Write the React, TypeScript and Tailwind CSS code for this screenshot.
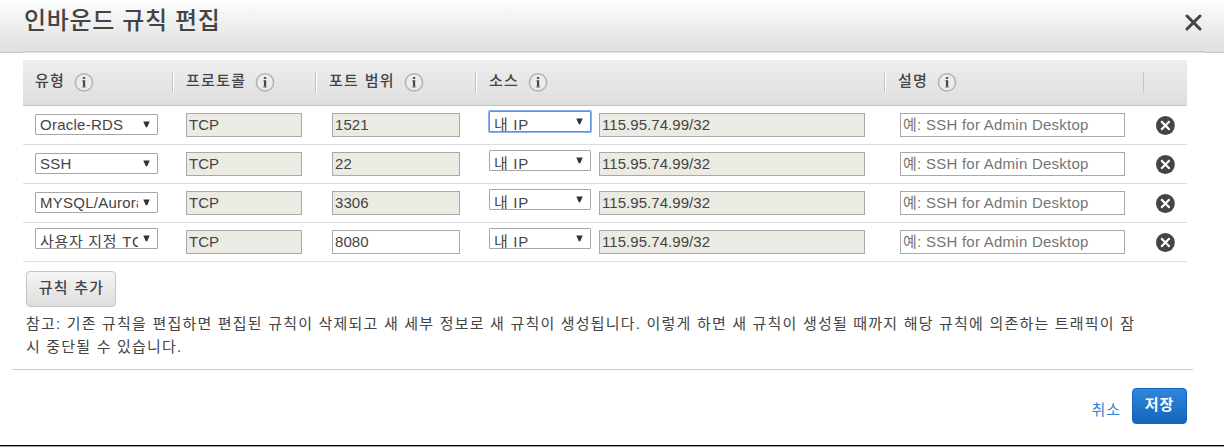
import React from "react";
import clsx from "clsx";

type Rule = { type: string; korean?: boolean; port: string; editable?: boolean; focused?: boolean };

const rules: Rule[] = [
  { type: "Oracle-RDS", port: "1521", focused: true },
  { type: "SSH", port: "22" },
  { type: "MYSQL/Aurora", port: "3306" },
  { type: "사용자 지정 TCP", korean: true, port: "8080", editable: true },
];

const columns = "grid grid-cols-[149px_143px_160px_409px_259px_44px]";

function InfoIcon() {
  return (
    <svg width="20" height="20" viewBox="0 0 20 20" className="shrink-0">
      <circle cx="10" cy="10.4" r="8.6" fill="#ececec" stroke="#b2b2b2" strokeWidth="1.5" />
      <rect x="8.9" y="5" width="2.3" height="2" fill="#555" />
      <rect x="8.9" y="8.2" width="2.3" height="7.2" fill="#484848" />
      <path d="M7.8 8.2h1.1v1H7.8zM7.8 14.4h4.5v1H7.8z" fill="#999" />
    </svg>
  );
}

function Heading({ label, className }: { label?: string; className?: string }) {
  return (
    <div className={clsx("relative flex h-[45px] items-start", className)}>
      {label && (
        <>
          <span className="mt-[11px] h-5 whitespace-nowrap text-[15px] font-medium leading-5 tracking-[1.3px]">{label}</span>
          <span className="mt-[12px] ml-[9px]">
            <InfoIcon />
          </span>
        </>
      )}
    </div>
  );
}

function Divider({ last }: { last?: boolean }) {
  return <span className={clsx("mt-3 h-[21px] w-[2px] shrink-0 border-l border-[#c4c4c4]", !last && "border-r border-r-white")} />;
}

function Arrow({ className }: { className?: string }) {
  return (
    <svg width="7" height="7" viewBox="0 0 7 7" className={clsx("shrink-0", className)}>
      <path d="M.3.4h6.4L4.2 6.2H2.8z" fill="#333" />
    </svg>
  );
}

function Select({ value, low, focused, className }: { value: string; low?: boolean; focused?: boolean; className?: string }) {
  return (
    <div
      className={clsx(
        "flex h-[21px] items-start overflow-hidden rounded-[1px] border bg-white pl-[4px]",
        focused ? "border-[#5f8fdf] shadow-[0_0_0_1px_#8cb2f5]" : "border-[#a6a6a6]",
        className,
      )}
    >
      <span
        className={clsx(
          "h-[19px] flex-1 overflow-hidden whitespace-nowrap text-[15px] leading-[19px]",
          low ? "pt-[3px] tracking-[0.7px]" : "tracking-[0.25px]",
        )}
      >
        {value}
      </span>
      <Arrow className="mt-[6px] mr-[7px] ml-[5px]" />
    </div>
  );
}

function Field({ value, disabled, placeholder, className }: { value: string; disabled?: boolean; placeholder?: boolean; className?: string }) {
  return (
    <div
      className={clsx(
        "mt-[7px] h-[24px] overflow-hidden whitespace-nowrap border border-[#a9a9a9] pl-[2px] text-[15px] leading-[22px]",
        disabled ? "bg-[#ebebe4]" : "bg-white",
        placeholder ? "tracking-[0.25px] text-[#757575]" : "tracking-[0.05px]",
        className,
      )}
    >
      {value}
    </div>
  );
}

function RemoveIcon() {
  return (
    <svg width="20" height="20" viewBox="0 0 20 20">
      <circle cx="10.4" cy="10.5" r="9.4" fill="#444" />
      <path d="M6.2 6.3l8.4 8.4M14.6 6.3l-8.4 8.4" stroke="#fff" strokeWidth="2.2" />
    </svg>
  );
}

export default function App() {
  return (
    <div className="flex h-[447px] w-[1224px] flex-col overflow-hidden bg-white font-['Liberation_Sans','Noto_Sans_CJK_KR',sans-serif] text-[#444]">
      <header className="relative flex h-[53px] shrink-0 items-start justify-between border-b border-[#c8c8c8] bg-linear-to-b from-[#fdfdfd] to-[#dfdfdf] pr-[22px] pl-6">
        <h1 className="mt-[4px] whitespace-nowrap text-[24px] font-medium leading-[34px] tracking-[0.65px]">인바운드 규칙 편집</h1>
        <svg width="17" height="17" viewBox="0 0 17 17" className="mt-[14px]">
          <path d="M2 2l13 13M15 2l-13 13" stroke="#444" strokeWidth="3" strokeLinecap="round" />
        </svg>
        <span className="absolute top-[51px] left-[23px] h-[2px] w-[1181px] border-t border-[#c8c8c8] bg-[#e2e2e2]" />
      </header>

      <main className="mt-[7px] ml-[23px] w-[1164px]">
        <div className={clsx(columns, "h-[46px] border-b border-[#c4c4c4] bg-linear-to-b from-[#eee] to-[#dedede]")}>
          <Heading label="유형" className="pl-[12px]" />
          <div className="flex"><Divider /><Heading label="프로토콜" className="pl-[12px]" /></div>
          <div className="flex"><Divider /><Heading label="포트 범위" className="pl-[12px]" /></div>
          <div className="flex"><Divider /><Heading label="소스" className="pl-[12px]" /></div>
          <div className="flex"><Divider /><Heading label="설명" className="pl-[12px]" /></div>
          <div className="flex"><Divider last /></div>
        </div>

        {rules.map((rule) => (
          <div key={rule.type} className={clsx(columns, "h-[39px] border-b border-[#ddd]")}>
            <Select value={rule.type} low={rule.korean} className={clsx("ml-3 w-[123px]", rule.korean ? "mt-[5px]" : "mt-2")} />
            <Field value="TCP" disabled className="ml-[14px] w-[116px]" />
            <Field value={rule.port} disabled={!rule.editable} className="ml-[17px] w-[128px]" />
            <div className="flex">
              <Select value="내 IP" low focused={rule.focused} className="mt-[5px] ml-[14px] w-[102px]" />
              <Field value="115.95.74.99/32" disabled className="ml-2 w-[266px]" />
            </div>
            <Field value="예: SSH for Admin Desktop" placeholder className="ml-4 w-[225px]" />
            <div className="mt-[9px] ml-3">
              <RemoveIcon />
            </div>
          </div>
        ))}

        <button className="mt-[9px] ml-[3px] block h-[36px] w-[90px] rounded-[4px] border border-[#c4c4c4] bg-linear-to-b from-[#f5f5f5] to-[#dedede] pb-[2px] pl-[1px] text-[15px] font-medium leading-8 tracking-[1.2px]">
          규칙 추가
        </button>
        <p className="mt-[5px] ml-[3px] whitespace-nowrap text-[15px] leading-[23px] tracking-[1.2px]">
          참고: 기존 규칙을 편집하면 편집된 규칙이 삭제되고 새 세부 정보로 새 규칙이 생성됩니다. 이렇게 하면 새 규칙이 생성될 때까지 해당 규칙에 의존하는 트래픽이 잠
          <br />시 중단될 수 있습니다.
        </p>
      </main>

      <footer className="mt-[11px] ml-3 flex h-[76px] w-[1181px] shrink-0 items-start justify-end border-t border-[#ccc] pr-[6px]">
        <a className="mt-[29px] mr-[11px] text-[15px] leading-[22px] tracking-[1px] text-[#2e80d8]">취소</a>
        <button className="mt-[18px] h-[36px] w-[55px] rounded-[4px] border border-[#1166bb] bg-linear-to-b from-[#3087dc] to-[#1466ba] pb-[2px] text-[15px] font-bold leading-8 tracking-[1px] text-white">
          저장
        </button>
      </footer>
      <div className="h-[2px] shrink-0 border-t border-black bg-[#9aa3ad]" />
    </div>
  );
}
